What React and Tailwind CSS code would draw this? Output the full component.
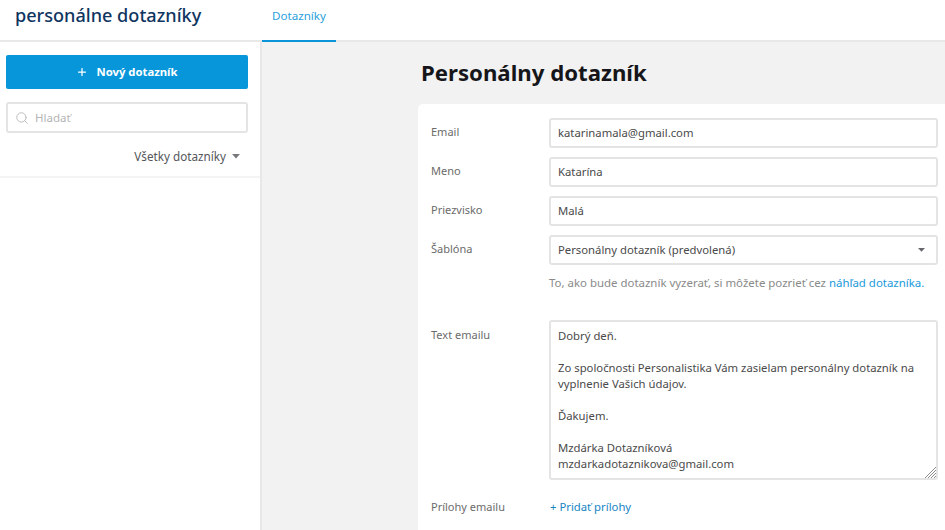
import React from 'react';
import { Plus, Search } from 'lucide-react';

const emailText = `Dobrý deň.

Zo spoločnosti Personalistika Vám zasielam personálny dotazník na
vyplnenie Vašich údajov.

Ďakujem.

Mzdárka Dotazníková
mzdarkadotaznikova@gmail.com`;

const Caret = ({ className, w = 9 }) => (
  <svg className={className} width={w} height={w * 0.55} viewBox="0 0 9 5" fill="currentColor">
    <path d="M0 0h9L4.5 5z" />
  </svg>
);

const Field = ({ label, value }) => (
  <div className="flex items-start mb-[9px]">
    <label className="w-[118px] shrink-0 pt-[6px] text-[11px] leading-4 text-[#6b6b6b]">{label}</label>
    <input
      readOnly
      value={value}
      className="w-[389px] h-[30px] px-[7px] pb-[2px] bg-white border-2 border-[#e4e4e4] rounded-[3px] text-[11.3px] text-[#4a4a4a] outline-none"
    />
  </div>
);

export default function App() {
  return (
    <div className="w-[945px] h-[530px] overflow-hidden flex flex-col bg-white font-['Noto_Sans',sans-serif]">
      {/* Header */}
      <header className="flex h-[42px] shrink-0 border-b-2 border-[#e8e8e8]">
        <div className="w-[262px] pl-[15px] pt-[2px] text-[18.1px] leading-[26px] font-medium text-[#10355f]">
          personálne dotazníky
        </div>
        <div className="w-[74px] h-[42px] flex justify-center pt-[8px] border-b-2 border-[#0a94d9] text-[11.6px] leading-4 text-[#2b9fdc]">
          Dotazníky
        </div>
      </header>

      <div className="flex flex-1 min-h-0">
        {/* Sidebar */}
        <aside className="w-[262px] shrink-0 border-r-2 border-[#e8e8e8] bg-white">
          <div className="px-[6px] pt-[13px]">
            <button className="w-[242px] h-[34px] flex items-center justify-center gap-[8px] bg-[#0796d9] rounded-[2px] text-white text-[11.3px] font-bold">
              <Plus size={12} strokeWidth={2.5} />
              Nový dotazník
            </button>
            <div className="w-[242px] h-[31px] mt-[13px] flex items-center pl-[7px] gap-[6px] border-2 border-[#e4e4e4] rounded-[3px] text-[11.5px] text-[#b5b5b5]">
              <Search size={14} strokeWidth={1.5} />
              Hladať
            </div>
          </div>
          <div className="h-[45px] flex items-center justify-end gap-[6px] pr-[20px] pt-[4px] border-b-2 border-[#f4f4f4] text-[11.7px] text-[#55565a]">
            Všetky dotazníky
            <Caret className="text-[#77787c]" w={8} />
          </div>
        </aside>

        {/* Main */}
        <main className="flex-1 min-w-0 bg-[#f2f2f2] pl-[156px]">
          <h1 className="pl-[3px] pt-[15px] h-[62px] text-[22.2px] leading-8 font-bold text-[#16161a]">
            Personálny dotazník
          </h1>
          <div className="h-[500px] bg-white rounded-tl-[5px] pl-[13px] pt-[14px]">
            <Field label="Email" value="katarinamala@gmail.com" />
            <Field label="Meno" value="Katarína" />
            <Field label="Priezvisko" value="Malá" />
            <div className="flex items-start">
              <label className="w-[118px] shrink-0 pt-[6px] text-[11px] leading-4 text-[#6b6b6b]">Šablóna</label>
              <div className="w-[389px] h-[30px] pl-[7px] pr-[11px] flex items-center justify-between border-2 border-[#e4e4e4] rounded-[3px] text-[11.3px] text-[#4a4a4a]">
                Personálny dotazník (predvolená)
                <Caret className="text-[#66676b]" w={7} />
              </div>
            </div>
            <p className="ml-[118px] mt-[10px] text-[11.45px] leading-4 text-[#8a8a8a]">
              To, ako bude dotazník vyzerať, si môžete pozrieť cez{' '}
              <a className="text-[#1a9bdc]">náhľad dotazníka.</a>
            </p>
            <div className="flex items-start mt-[29px]">
              <label className="w-[118px] shrink-0 pt-[7px] text-[11px] leading-4 text-[#6b6b6b]">Text emailu</label>
              <div className="relative w-[389px] h-[160px]">
                <textarea
                  readOnly
                  value={emailText}
                  className="w-full h-full px-[7px] pt-[6px] border-2 border-[#e4e4e4] rounded-[3px] text-[11.3px] leading-4 text-[#4a4a4a] outline-none overflow-hidden resize-none whitespace-pre"
                />
                {/* resize grip */}
                <svg className="absolute right-[2px] bottom-[2px]" width="12" height="12" viewBox="0 0 12 12" stroke="#8c8c8c" strokeWidth="1">
                  <path d="M1 12L12 1M4 12l8-8M7 12l5-5M10 12l2-2" />
                </svg>
              </div>
            </div>
            <div className="flex items-start mt-[19px]">
              <label className="w-[118px] shrink-0 text-[11px] leading-4 text-[#6b6b6b]">Prílohy emailu</label>
              <a className="pl-px text-[11.3px] leading-4 text-[#1585c4]">+ Pridať prílohy</a>
            </div>
          </div>
        </main>
      </div>
    </div>
  );
}
